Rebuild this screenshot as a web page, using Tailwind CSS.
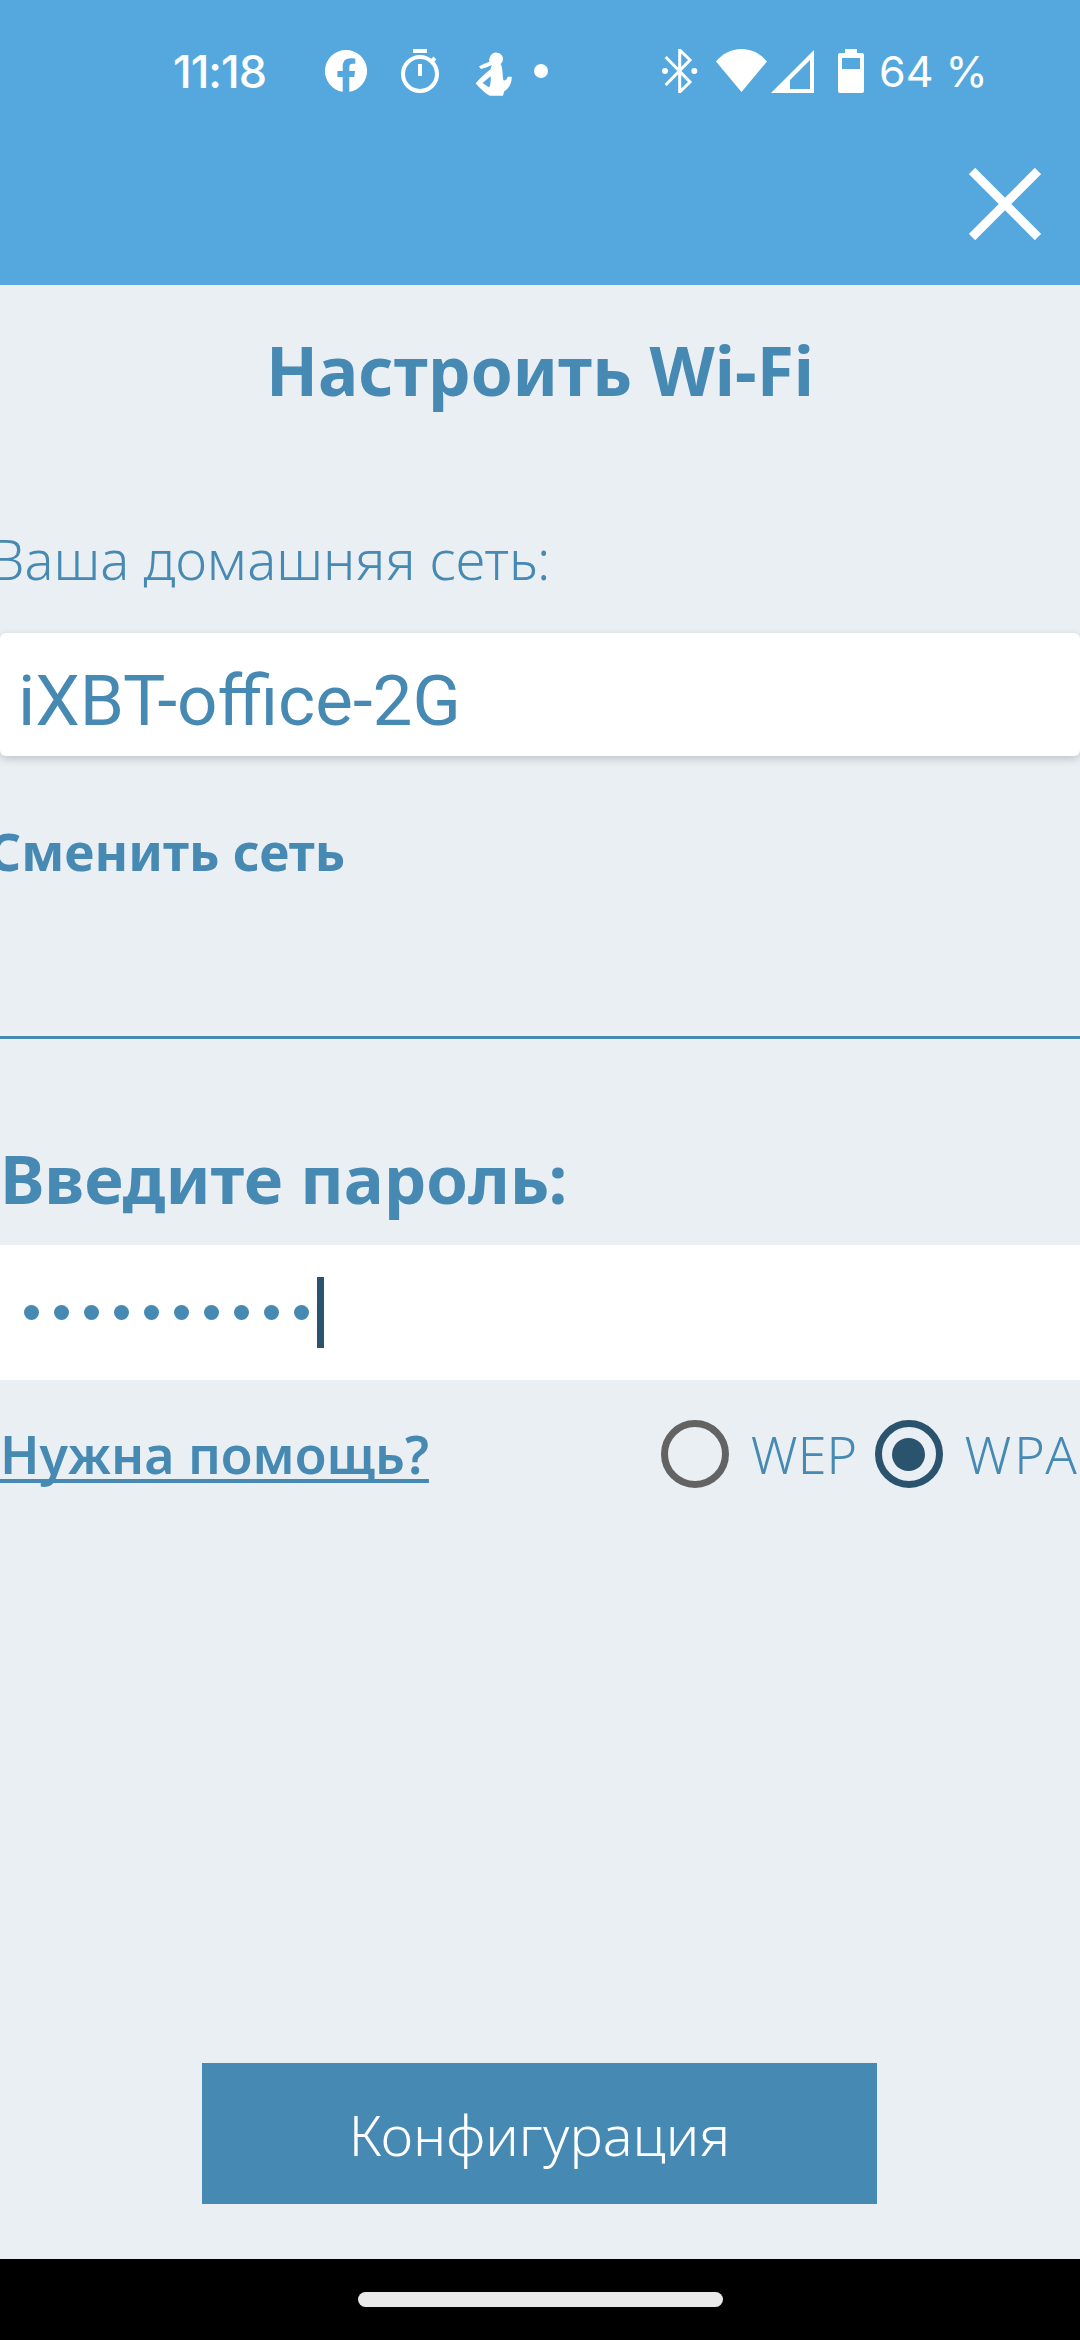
<!DOCTYPE html>
<html lang="ru">

<head>
  <meta charset="UTF-8" />
  <meta name="viewport" content="width=device-width, initial-scale=1.0" />
  <title>Настроить Wi-Fi</title>
  <script src="https://cdn.jsdelivr.net/npm/@tailwindcss/browser@4"></script>
</head>

<body class="bg-[#eaeff4] text-[#4689b3] font-['Noto_Sans',sans-serif]">
  <div class="w-[1080px] h-[2340px] overflow-hidden flex flex-col">

    <!-- Header -->
    <header class="h-[285px] shrink-0 bg-[#55a8dd] text-white flex flex-col">
      <div class="h-[49px] shrink-0"></div>
      <div class="h-[44px] flex items-center pl-[173px] font-['Inter',sans-serif]">
        <span class="w-[152px] text-[45px] leading-none font-medium tracking-[-1px]">11:18</span>
        <svg class="w-[42px] h-[42px]" viewBox="0 0 42 42"><path fill="#fff" d="M21 0a21 21 0 0 0-3.300 41.750V27h-5.300v-6h5.300v-4.600c0-5.300 3.100-8.200 7.900-8.200 2.300 0 4.700.4 4.700.4v5.200h-2.600c-2.600 0-3.400 1.600-3.400 3.200V21h5.800l-.9 6h-4.900v14.750A21 21 0 0 0 21 0z"/></svg>
        <svg class="w-[38px] h-[44px] ml-[34px]" viewBox="0 0 38 44" fill="none" stroke="#fff" stroke-width="4"><circle cx="19" cy="25" r="17"/><path d="M12 2h14M19 15v12M31 12l3-3"/></svg>
        <svg class="w-[38px] h-[45px] ml-[36px] mt-[5px]" viewBox="15 20 115 135"><path fill="#fff" fill-rule="evenodd" d="M78 24C90 24 100 33 100 43C100 50 96 57 92 59C95 62 97 70 98 80C99 90 99 100 101 108C107 110 112 104 114 97L126 97C127 110 122 130 103 142C102 148 101 152 99 155L60 155L52 150C40 142 28 130 17 117C30 102 48 86 62 75C63 70 64 66 66 62C55 68 42 72 33 74L27 66C38 60 50 56 58 52C57 40 65 24 78 24ZM62 96L38 116L58 130C62 120 64 108 62 96Z"/></svg>
        <span class="w-[14px] h-[14px] rounded-full bg-white ml-[21px]"></span>
        <svg class="w-[37px] h-[44px] ml-[113px]" viewBox="0 0 37 44" fill="none" stroke="#fff" stroke-width="3"><path d="M4.700 8L29 33L18.700 43V1L29 11L4.700 36"/><circle cx="4" cy="22" r="3" fill="#fff" stroke="none"/><circle cx="33.300" cy="22" r="3" fill="#fff" stroke="none"/></svg>
        <svg class="w-[51px] h-[44px] ml-[18px]" viewBox="0 0 51 44"><path fill="#fff" d="M0 12.500C6 5 15 0 25.500 0S45 5 51 12.500L25.500 43z"/></svg>
        <svg class="w-[43px] h-[44px] ml-[4px]" viewBox="0 0 43 44"><path fill="#fff" fill-rule="evenodd" d="M43 1v43H0zM39 11L19 31v9h20z"/></svg>
        <svg class="w-[26px] h-[44px] ml-[24px]" viewBox="0 0 26 44"><path fill="#fff" fill-rule="evenodd" d="M7 0h12v4h5a2 2 0 0 1 2 2v36a2 2 0 0 1-2 2H2a2 2 0 0 1-2-2V6a2 2 0 0 1 2-2h5zM4 9v11h18V9z"/></svg>
        <span class="ml-[15px] text-[43px] leading-none font-normal">64 %</span>
      </div>
      <div class="flex justify-end pr-[39px] pt-[75px]">
        <svg class="w-[72px] h-[72px]" viewBox="0 0 72 72" fill="none" stroke="#fff" stroke-width="9"><path d="M3 3l66 66M69 3L3 69"/></svg>
      </div>
    </header>

    <!-- Form -->
    <main class="flex-1 flex flex-col">
      <h2 class="text-center mt-[45px] text-[67.5px] leading-[80px] font-bold">Настроить Wi-Fi</h2>
      <p class="-ml-[10px] mt-[119px] text-[54.5px] leading-[60px] font-light whitespace-nowrap">Ваша домашняя сеть:</p>
      <div class="mt-[44px] h-[123px] bg-white rounded-[6px] shadow-[0_3px_8px_rgba(0,0,0,0.18)] pl-[18px] pt-[14px] flex items-center font-['Roboto',sans-serif] text-[71px]">iXBT-office-2G</div>
      <p class="-ml-[12px] mt-[65px] text-[51.500px] leading-[60px] font-bold whitespace-nowrap">Сменить сеть</p>

      <div class="mt-[155px] h-[3px] bg-[#4689b3]"></div>

      <p class="mt-[99px] text-[67px] leading-[80px] font-bold whitespace-nowrap">Введите пароль:</p>

      <div class="mt-[27px] h-[135px] bg-white flex items-center pl-[24px] gap-[15px]">
        <div class="flex gap-[15px]">
          <span class="w-[15px] h-[15px] rounded-full bg-[#4689b3]"></span>
          <span class="w-[15px] h-[15px] rounded-full bg-[#4689b3]"></span>
          <span class="w-[15px] h-[15px] rounded-full bg-[#4689b3]"></span>
          <span class="w-[15px] h-[15px] rounded-full bg-[#4689b3]"></span>
          <span class="w-[15px] h-[15px] rounded-full bg-[#4689b3]"></span>
          <span class="w-[15px] h-[15px] rounded-full bg-[#4689b3]"></span>
          <span class="w-[15px] h-[15px] rounded-full bg-[#4689b3]"></span>
          <span class="w-[15px] h-[15px] rounded-full bg-[#4689b3]"></span>
          <span class="w-[15px] h-[15px] rounded-full bg-[#4689b3]"></span>
          <span class="w-[15px] h-[15px] rounded-full bg-[#4689b3]"></span>
        </div>
        <span class="-ml-[7px] w-[7px] h-[71px] bg-[#2a536e]"></span>
      </div>

      <div class="mt-[40px] h-[68px] flex items-center whitespace-nowrap">
        <div class="w-[662px]">
          <a class="text-[52px] leading-[60px] font-semibold underline decoration-[4px] underline-offset-[5px] [text-decoration-skip-ink:none]">Нужна помощь?</a>
        </div>
        <span class="w-[68px] h-[68px] rounded-full border-[7px] border-[#636363]"></span>
        <span class="ml-[22px] w-[124px] text-[52px] leading-none font-light">WEP</span>
        <span class="w-[68px] h-[68px] rounded-full border-[7px] border-[#2a536e] flex items-center justify-center">
          <span class="w-[33px] h-[33px] rounded-full bg-[#2a536e]"></span>
        </span>
        <span class="ml-[22px] text-[52px] leading-none font-light tracking-[3px]">WPA</span>
      </div>

      <div class="mt-auto mb-[55px] ml-[202px] w-[675px] h-[141px] bg-[#4689b3] text-white flex items-center justify-center text-[56px] font-light">Конфигурация</div>
    </main>

    <!-- Nav bar -->
    <footer class="h-[81px] shrink-0 bg-black flex justify-center pt-[33px]">
      <div class="w-[365px] h-[15px] rounded-full bg-[#e9e9e9]"></div>
    </footer>
  </div>
</body>

</html>
